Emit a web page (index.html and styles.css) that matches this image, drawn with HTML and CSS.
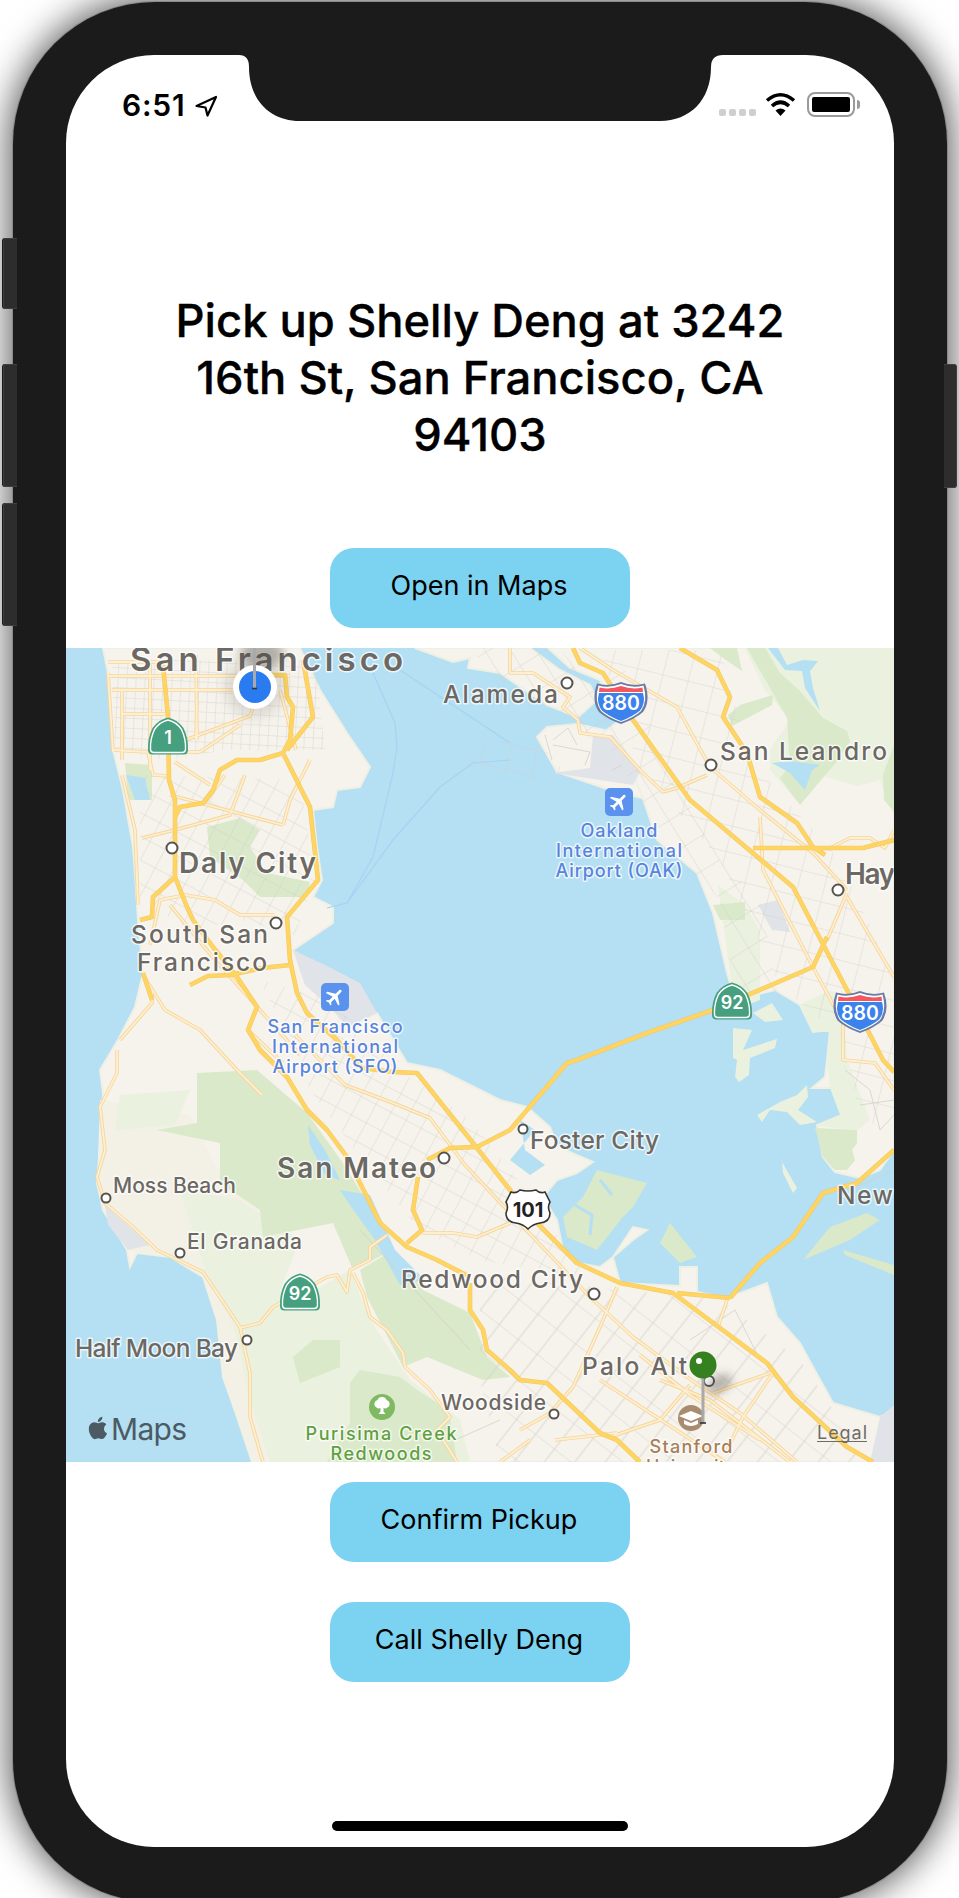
FILE: index.html
```html
<!DOCTYPE html>
<html lang="en">
<head>
<meta charset="utf-8">
<title>Pickup</title>
<link rel="stylesheet" href="styles.css">
</head>
<body>
<div class="stage">
  <span class="side-btn side-mute"></span>
  <span class="side-btn side-up"></span>
  <span class="side-btn side-down"></span>
  <span class="side-btn side-power"></span>
  <div class="device">
    <svg class="notch" viewBox="239 55 484 66" aria-hidden="true"><path d="M239 55H723Q711 55 711 67C711 100 690 121 660 121H300C270 121 249 100 249 67Q249 55 239 55Z"/></svg>
    <main class="screen">
      <header class="status">
        <div class="status-left">
          <span class="time">6:51</span>
          <svg class="loc" viewBox="195 94 23 22"><path d="M196.500 105L216 96L207.500 114.500L205.500 106.500Z"/></svg>
        </div>
        <div class="status-right">
          <div class="signal"><i></i><i></i><i></i><i></i></div>
          <svg class="wifi" viewBox="766 92 32 25"><path class="wifi-arc" d="M768 100.500Q781.500 89 795 100.500"/><path class="wifi-arc" d="M773 106Q781.500 98.500 790 106"/><path class="wifi-dot" d="M776.500 110.500Q781.500 106.500 786.500 110.500L781.500 116Z"/></svg>
          <div class="battery"><span class="battery-fill"></span></div>
          <span class="battery-nub"></span>
        </div>
      </header>
      <h1 class="title">Pick up Shelly Deng at 3242<br>16th St, San Francisco, CA<br>94103</h1>
      <button class="action action-open">Open in Maps</button>
      <svg class="map" viewBox="66 648 828 814" aria-label="Map of the San Francisco Bay">
        <defs>
          <pattern id="gridA" width="9" height="10" patternUnits="userSpaceOnUse" patternTransform="rotate(3)"><path class="st" d="M0 0H9M0 0V10"/></pattern>
          <pattern id="gridB" width="17" height="21" patternUnits="userSpaceOnUse" patternTransform="rotate(28)"><path class="st" d="M0 0H17M0 0V21"/></pattern>
          <pattern id="gridC" width="24" height="32" patternUnits="userSpaceOnUse" patternTransform="rotate(38)"><path class="st" d="M0 0H24M9 0V32"/></pattern>
          <pattern id="gridD" width="22" height="30" patternUnits="userSpaceOnUse" patternTransform="rotate(-32)"><path class="st" d="M0 0H22M0 0V30"/></pattern>
          <pattern id="gridE" width="26" height="26" patternUnits="userSpaceOnUse" patternTransform="rotate(14)"><path class="st" d="M0 0H26M0 0V26"/></pattern>
          <g id="ihs">
            <path class="ihs-edge" d="M3 2.500Q15 6 27 1Q39 6 51 2.500Q57 20 49 31Q41 38 27 43Q13 38 5 31Q-3 20 3 2.500Z"/>
            <path class="ihs-white" d="M4.500 4.500Q15 7.500 27 3Q39 7.500 49.500 4.500Q54 20 47 30Q40 36.500 27 41Q14 36.500 7 30Q0 20 4.500 4.500Z"/>
            <path class="ihs-blue" d="M5 12H49Q52 22 46 29.500Q39 35.500 27 40Q15 35.500 8 29.500Q2 22 5 12Z"/>
            <path class="ihs-red" d="M5.500 6.500Q16 9 27 5Q38 9 48.500 6.500L49 11H5Z"/>
          </g>
          <g id="state">
            <path class="state-bg" d="M20.500 0.500Q30 2.500 36 11Q41 21 40.500 33Q40.500 37.500 36 37.500H5Q0.500 37.500 0.500 33Q0 21 5 11Q11 2.500 20.500 0.500Z"/>
            <path class="state-line" d="M20.500 3Q29 5 34 12.500Q38.500 22 38 32Q38 35.500 34.500 35.500H6.500Q3 35.500 3 32Q2.500 22 7 12.500Q12 5 20.500 3Z"/>
          </g>
          <g id="plane">
            <rect class="air-box" width="28" height="28" rx="5"/>
            <path class="air-plane" transform="translate(14 14) rotate(45) scale(.92) translate(-12 -12)" d="M21 16v-2l-8-5V3.500c0-.83-.67-1.500-1.500-1.500S10 2.670 10 3.500V9l-8 5v2l8-2.500V19l-2 1.500V22l3.500-1 3.500 1v-1.500L13 19v-5.500l8 2.500z"/>
          </g>
          <g id="roads-a">
            <path d="M108 662H170M108 676H290M112 690H255M122 714H165M108 673L113 752M122 690L122 760M150 662V770M196 655L197 740M172 745L250 716L262 680M172 752H200L240 725M170 795L245 815L283 825M175 762L210 785M203 805L225 775M112 750L148 752L153 775L170 776M122 775L135 830L138 905M142 838L175 830L230 815L245 775M280 690L296 750M310 760L290 800L283 825M196 740L197 700"/>
            <path d="M150 945L160 900L185 895L215 900L240 915L275 915M143 975L165 1010L200 1030L237 1070L262 1095M170 905L215 960L260 1010L300 1055M120 1040L152 1003L152 990M248 1030L283 1063M295 1035L345 1085L393 1103L430 1118L465 1165L510 1213L590 1297L633 1337L687 1377L740 1413L797 1462"/>
            <path d="M117 1050L117 1073L100 1107L105 1150L97 1177L105 1203L133 1227L157 1250L203 1272L240 1327L250 1373L250 1417L263 1462M240 1328L260 1323L273 1307L327 1277L337 1275L347 1292L350 1270L370 1260L370 1247L387 1235M353 1273L363 1293L370 1317L387 1330L403 1353L405 1367L430 1390L450 1417L437 1430L457 1462"/>
            <path d="M422 1233L453 1233L477 1237L510 1223M520 1430L550 1413L573 1387L600 1327L617 1287M530 1440L500 1462M610 1437L660 1420L690 1385M617 1433L555 1440M713 1393L773 1372M727 1300L718 1327M773 1373L743 1417L727 1450M600 1380L725 1462M660 1380L710 1400L790 1462M640 1355L690 1395L760 1440"/>
            <path d="M510 648L510 673L533 673L570 697L563 707L578 720L580 733L610 737L640 770L663 792L677 788L707 775M580 648L613 670L677 707L710 767L760 810L813 853L847 890M760 817L763 870L813 967L843 1023L843 1060L875 1063L894 1090M847 893L827 940M847 897L894 977M830 848L850 838L870 838L885 848L894 830"/>
          </g>
          <g id="roads-h">
            <path d="M163 665L168 717L169 780L175 800L175 877L153 897L152 917L140 920M143 973L152 1000M175 877L187 907L193 920L213 947L237 977L257 1007L248 1030L260 1050L287 1077L307 1110L327 1130L347 1157L360 1183L380 1223L407 1247L437 1260L470 1277M470 1283L470 1310L483 1330L487 1350L510 1370L520 1380L547 1383L600 1433L617 1440L640 1462"/>
            <path d="M270 675H285L287 697L293 707L290 740L283 753L260 760L237 760L220 770L213 790L203 803L180 807L175 817M303 660L313 717L287 750M283 753L310 807L318 880L287 917L290 960L297 993L307 1013L337 1040L362 1068L393 1072L417 1073L473 1143L510 1190L537 1223L577 1263L620 1283L673 1293L767 1363L793 1397L847 1447L873 1462M230 975L262 968L290 965M190 985L208 976L232 975"/>
            <path d="M427 1160L450 1148L477 1147L510 1130L533 1103L567 1063L577 1060L647 1033L713 1010L813 967L827 937M418 1177L413 1210L422 1230L407 1243M730 1298L760 1263L793 1237L823 1193L857 1183L894 1150M677 1293L730 1298"/>
            <path d="M573 648L580 663L603 673L633 720L690 800L793 887L847 990L883 1060L894 1072M680 648L717 670L730 697L723 717L747 753L760 797L797 823L813 847L825 855M753 848L813 848L863 848L894 840"/>
          </g>
        </defs>

        <rect class="water" x="66" y="648" width="828" height="814"/>
        <path class="land" d="M103 648L108 673L113 750L123 790L133 847L135 873L138 920L143 973L135 1007L118 1040L100 1070L103 1093L102 1133L97 1183L103 1210L127 1250L130 1267L137 1253L170 1257L203 1277L217 1320L223 1377L237 1417L252 1462H894V1410L880 1417L833 1403L813 1367L800 1343L777 1317L767 1283L727 1298L697 1292L697 1267L680 1267L680 1286L620 1283L613 1257L633 1240L647 1230L633 1227L613 1257L600 1267L577 1263L563 1250L557 1220L543 1197L557 1180L577 1173L593 1162L558 1147L550 1127L527 1107L500 1100L440 1070L407 1063L377 1013L347 1027L333 1010L293 950L333 923L333 907L313 897L322 880L317 847L313 810L333 807L337 790L360 787L370 767L347 733L320 690L300 648Z"/>
        <path class="land" d="M415 648L453 662L470 658L468 668L500 673L547 705L578 717L597 700L590 685L560 670L530 648Z"/>
        <path class="land" d="M537 737L547 727L577 724L613 732L640 772L650 800L610 790L557 772Z"/>
        <path class="land" d="M548 648L570 668L600 680L620 720L600 735L625 760L640 790L657 840L697 873L713 913L727 973L735 1000L775 990L800 1005L813 1032L830 1030L827 1060L825 1077L812 1088L832 1088L842 1115L817 1125L823 1157L835 1172L860 1178L880 1170L894 1150V648Z"/>
        <path class="tan" d="M100 1100L190 1115L215 1165L260 1210L280 1290L325 1400L300 1462H252L237 1417L223 1377L217 1320L203 1277L170 1257L137 1253L127 1250L103 1210L97 1183Z"/>
        <path class="green-l" d="M180 1190L240 1200L300 1240L280 1290L345 1400L330 1462H270L250 1400L235 1330L205 1270Z"/>
        <path class="green-l" d="M120 1095L190 1090L175 1125L115 1130Z"/>
        <path class="green-l" d="M280 1310L350 1270L370 1320L390 1350L410 1380L460 1420L470 1462H300Z"/>
        <path class="green-l" d="M745 648H894V815L880 780L857 786L820 775L800 805L770 770L770 750L790 720L765 690Z"/>
        <path class="green-l" d="M718 885L745 905L760 930L760 1000L735 1010Z"/>
        <path class="green-l" d="M800 1005L830 990L850 1000L845 1032L813 1032Z"/>
        <path class="green-l" d="M830 1032L845 1030L847 1060L870 1120L857 1130L815 1126L840 1115L830 1088L827 1060Z"/>
        <path class="green-l" d="M733 1028L752 1030L743 1050L777 1039L775 1048L750 1058L749 1075L739 1082L735 1077L737 1060L733 1058Z"/>
        <path class="green-l" d="M753 1013L772 1003L783 1020L765 1022Z"/>
        <path class="green-l" d="M757 1115L780 1102L797 1095L807 1085L808 1097L798 1110L817 1122L800 1125L787 1112L770 1110L762 1122Z"/>
        <path class="green-l" d="M782 1162L797 1188L793 1193L783 1173Z"/>
        <path class="green-d" d="M197 1073L257 1070L307 1113L343 1163L380 1223L393 1250L353 1270L333 1223L263 1237L260 1210L220 1183L220 1143L157 1130L197 1123Z"/>
        <path class="green-d" d="M360 1270L393 1250L423 1290L470 1313L487 1357L510 1377L483 1380L427 1357L403 1367L367 1297Z"/>
        <path class="green-d" d="M350 1383L360 1370L400 1377L417 1390L437 1403L450 1417L457 1462H327L350 1423Z"/>
        <path class="green-d" d="M293 1357L313 1340L340 1340L340 1367L300 1383Z"/>
        <path class="green-d" d="M207 827L240 818L260 830L250 847L267 873L310 882L307 897L260 897L243 880L210 857Z"/>
        <path class="green-d" d="M125 763L152 765L152 800L128 800Z"/>
        <path class="water" d="M126 775L145 778L150 800L135 800Z"/>
        <path class="green-d" d="M747 648H765L780 673L800 691L823 718L847 731L850 741L838 760L800 805L780 778L790 765L787 718L770 688Z"/>
        <path class="green-d" d="M710 648H737L742 671L723 658Z"/>
        <path class="green-d" d="M728 715L740 705L773 695L772 705L732 726Z"/>
        <path class="green-d" d="M883 775L894 745V812L884 800Z"/>
        <path class="water" d="M768 648H778L787 665L803 660L818 661L810 671L813 688L820 711L805 688L802 671L785 670Z"/>
        <path class="water" d="M772 763L790 761L820 765L812 770L805 790L790 773Z"/>
        <path class="green-d" d="M713 905L745 902L745 920L720 920Z"/>
        <path class="green-d" d="M563 1217L583 1197L597 1170L647 1183L633 1207L623 1217L597 1250L567 1237Z"/>
        <path class="green-d" d="M660 1243L670 1223L697 1257L680 1263Z"/>
        <path class="green-d" d="M815 1128L857 1130L857 1143L852 1150L855 1160L847 1170L835 1170L823 1157Z"/>
        <path class="green-d" d="M803 1260L830 1227L867 1213L880 1220L850 1240Z"/>
        <path class="green-d" d="M843 1250L894 1265V1275L845 1255Z"/>
        <path class="channel" d="M575 1205L592 1215L590 1235M600 1180L612 1195"/>
        <path class="water" d="M520 1120L535 1130L510 1160L530 1175L545 1165L525 1150Z"/>
        <path class="water" d="M308 1125L325 1150L340 1180L325 1175L310 1145Z"/>
        <path class="water" d="M340 1190L370 1195L395 1250L425 1280L400 1285L375 1240L350 1205Z"/>
        <path class="airport" d="M593 735L613 735L640 772L633 785L567 775L553 773L590 768Z"/>
        <path class="airport" d="M293 950L325 965L360 983L377 1013L347 1027L333 1010L305 985Z"/>
        <path class="airport" d="M105 1205L150 1245L128 1250L108 1225Z"/>
        <path class="airport" d="M758 905L778 900L790 932L772 930Z"/>
        <path class="airport" d="M880 1417L894 1405V1462H870Z"/>
        <path class="ferry" d="M373 673L395 723L397 747L393 773L373 857L347 903L327 908M510 760L473 763L440 787L393 840L347 903M400 670L510 743"/>

        <path class="zone" fill="url(#gridA)" d="M112 660H315L325 750H225L165 760L115 750Z"/>
        <path class="zone" fill="url(#gridB)" d="M140 775L300 780L315 880L295 935L245 920L190 930L140 900Z"/>
        <path class="zone" fill="url(#gridB)" d="M260 980L330 1000L400 1070L470 1120L510 1170L590 1280L480 1260L420 1230L370 1170L310 1090Z"/>
        <path class="zone" fill="url(#gridC)" d="M480 1275L620 1290L720 1300L800 1360L840 1420L860 1462H500L480 1380Z"/>
        <path class="zone" fill="url(#gridD)" d="M470 648H560L600 700L620 660L660 750L720 860L760 900L780 1000L735 990L720 900L660 830L610 750L570 720L500 680Z"/>
        <path class="zone" fill="url(#gridE)" d="M600 650H720L750 760L840 860L894 980V1130L860 1120L845 1040L780 985L720 860L640 770Z"/>
        <path class="zone" fill="url(#gridE)" d="M455 755L480 740L540 745L565 772L520 780Z"/>
        <path class="st-path" d="M545 735L552 760M553 745L590 752L585 765M553 740L568 728L577 745M612 770L622 765M690 1340L735 1310L760 1360M845 1070L870 1090L880 1130L894 1115M860 1105L894 1100M850 1190L894 1170M360 1230L470 1350M500 1420L455 1440"/>

        <use href="#roads-a" class="art-case"/>
        <use href="#roads-a" class="art-fill"/>
        <use href="#roads-h" class="hwy-case"/>
        <use href="#roads-h" class="hwy-fill"/>

        <g class="dots">
          <circle cx="567" cy="683" r="5.500"/><circle cx="711" cy="765" r="5.500"/><circle cx="838" cy="890" r="5.500"/><circle cx="172" cy="848" r="5.500"/><circle cx="276" cy="923" r="5.500"/><circle cx="444" cy="1158" r="5.500"/><circle cx="523" cy="1129" r="4.500"/><circle cx="106" cy="1198" r="4.500"/><circle cx="180" cy="1253" r="4.500"/><circle cx="247" cy="1340" r="4.500"/><circle cx="594" cy="1294" r="5.500"/><circle cx="554" cy="1414" r="4.500"/><circle cx="709" cy="1381" r="5"/>
        </g>

        <g class="lbl">
          <text class="lbl-xl" x="130" y="671" textLength="273">San Francisco</text>
          <text class="lbl-m" x="443" y="703" textLength="115">Alameda</text>
          <text class="lbl-m" x="720" y="760" textLength="167">San Leandro</text>
          <text class="lbl-l" x="845" y="884" textLength="112">Hayward</text>
          <text class="lbl-l" x="179" y="873" textLength="137">Daly City</text>
          <text class="lbl-m" x="131" y="943" textLength="137">South San</text>
          <text class="lbl-m" x="137" y="971" textLength="130">Francisco</text>
          <text class="lbl-m" x="530" y="1149" textLength="129">Foster City</text>
          <text class="lbl-l" x="277" y="1178" textLength="159">San Mateo</text>
          <text class="lbl-s" x="113" y="1193" textLength="123">Moss Beach</text>
          <text class="lbl-s" x="187" y="1249" textLength="115">El Granada</text>
          <text class="lbl-m" x="837" y="1204" textLength="98">Newark</text>
          <text class="lbl-m" x="401" y="1288" textLength="182">Redwood City</text>
          <text class="lbl-m" x="75" y="1357" textLength="163">Half Moon Bay</text>
          <text class="lbl-m" x="582" y="1375" textLength="122">Palo Alto</text>
          <text class="lbl-s" x="441" y="1410" textLength="105">Woodside</text>
        </g>
        <g class="lbl-air">
          <text x="335" y="1033" textLength="135">San Francisco</text>
          <text x="335" y="1053" textLength="126">International</text>
          <text x="335" y="1073" textLength="125">Airport (SFO)</text>
          <text x="619" y="837" textLength="77">Oakland</text>
          <text x="619" y="857" textLength="126">International</text>
          <text x="619" y="877" textLength="127">Airport (OAK)</text>
        </g>
        <g class="lbl-park">
          <text x="381" y="1440" textLength="151">Purisima Creek</text>
          <text x="381" y="1460" textLength="101">Redwoods</text>
        </g>
        <g class="lbl-uni">
          <text x="691" y="1453" textLength="83">Stanford</text>
          <text x="691" y="1473" textLength="90">University</text>
        </g>

        <use href="#plane" x="321" y="983"/>
        <use href="#plane" x="605" y="788"/>

        <use href="#state" transform="translate(147.500 717)"/>
        <text class="shield-num" x="168" y="744">1</text>
        <use href="#state" transform="translate(711.500 982)"/>
        <text class="shield-num" x="732" y="1009">92</text>
        <use href="#state" transform="translate(279.500 1273)"/>
        <text class="shield-num" x="300" y="1300">92</text>
        <use href="#ihs" transform="translate(594 681)"/>
        <text class="shield-ihs" x="621" y="710">880</text>
        <use href="#ihs" transform="translate(833 990)"/>
        <text class="shield-ihs" x="860" y="1020">880</text>
        <path class="us-shield" d="M511 1192Q516 1194 520 1190Q528 1192 536 1190Q540 1194 545 1192L550 1202Q547 1207 550 1213Q550 1222 540 1223Q533 1224 528 1229Q523 1224 516 1223Q506 1222 506 1213Q509 1207 506 1202Z"/>
        <text class="shield-us" x="528" y="1217">101</text>

        <g class="park-ico">
          <circle cx="382" cy="1407" r="13"/>
          <path d="M382 1397a4.500 4.500 0 0 1 4.500 3a4 4 0 0 1 1 7.500a3.500 3.500 0 0 1-4 .5v3.500l2 2.500h-7l2-2.500v-3.500a3.500 3.500 0 0 1-4-.5a4 4 0 0 1 1-7.500a4.500 4.500 0 0 1 4.500-3z"/>
        </g>
        <g class="uni-ico">
          <circle cx="691" cy="1418" r="13"/>
          <path d="M691 1411L703 1416L691 1421L679 1416Z"/>
          <path d="M684 1420V1424Q691 1428 698 1424V1420L691 1423Z"/>
        </g>

        <ellipse class="pin-shadow" cx="719" cy="1384" rx="14" ry="8" transform="rotate(-30 719 1384)"/>
        <path class="pin-stem" d="M703 1378V1423"/>
        <path class="pin-tip" d="M700 1423H706"/>
        <circle class="pin-green" cx="703" cy="1365" r="13.500"/>
        <circle class="pin-hi" cx="699" cy="1361" r="3"/>

        <ellipse class="pin-shadow" cx="262" cy="654" rx="22" ry="14"/>
        <circle class="me-halo" cx="255" cy="687" r="30"/>
        <circle class="me-ring" cx="255" cy="687" r="22"/>
        <circle class="me-dot" cx="255" cy="687" r="16"/>
        <path class="pin-stem" d="M254.500 648V688"/>
        <path class="pin-tip" d="M252 688.500H257"/>

        <g class="brand">
          <path transform="translate(84.500 1414.500) scale(1.120)" d="M18.710 19.500c-.83 1.240-1.710 2.450-3.050 2.470-1.340.03-1.770-.79-3.290-.79-1.530 0-2 .77-3.270.82-1.310.05-2.300-1.320-3.140-2.530C4.250 17 2.940 12.450 4.700 9.390c.87-1.520 2.430-2.480 4.120-2.510 1.280-.02 2.500.87 3.290.87.78 0 2.260-1.070 3.810-.91.65.03 2.470.26 3.640 1.980-.09.06-2.170 1.280-2.150 3.810.03 3.020 2.650 4.030 2.680 4.040-.03.07-.42 1.440-1.380 2.830M13 3.500c.73-.83 1.940-1.460 2.940-1.500.13 1.170-.34 2.350-1.040 3.190-.69.85-1.830 1.510-2.950 1.420-.15-1.150.41-2.350 1.050-3.110z"/>
          <text x="111" y="1440" textLength="76">Maps</text>
        </g>
        <text class="legal" x="817" y="1439" textLength="50">Legal</text>
        <path class="legal-line" d="M817 1441.500H867"/>
      </svg>
      <button class="action action-confirm">Confirm Pickup</button>
      <button class="action action-call">Call Shelly Deng</button>
      <div class="home-bar"></div>
    </main>
  </div>
</div>
</body>
</html>
```
FILE: styles.css
```css
* { box-sizing: border-box; }
html, body { margin: 0; padding: 0; background: #fff; }
body { font-family: Inter, "Liberation Sans", sans-serif; overflow: hidden; }

.stage {
  position: relative;
  width: 959px;
  height: 1898px;
  padding: 2px 12px 0 13px;
  overflow: hidden;
  background: #fff;
}
.device {
  position: relative;
  height: 1900px;
  padding: 53px 53px 0 53px;
  background: #1b1b1b;
  border-radius: 142px;
  box-shadow: 0 0 0 1px #8a8a8a, 0 0 36px 4px rgba(0, 0, 0, .66);
}
.side-btn {
  position: absolute;
  left: 3px;
  width: 14px;
  background: #2d2d2d;
  border: 1px solid #3f3f3f;
  border-right: 0;
  border-radius: 3px 0 0 3px;
  box-shadow: -1px 0 0 #1a1a1a;
  z-index: 2;
}
.side-mute { top: 238px; height: 71px; }
.side-up { top: 364px; height: 123px; }
.side-down { top: 503px; height: 123px; }
.side-power {
  left: auto; right: 2px; top: 364px; height: 124px; width: 13px;
  border: 1px solid #3f3f3f; border-left: 0; border-radius: 0 3px 3px 0;
}
.notch {
  position: absolute;
  left: 226px;
  top: 53px;
  width: 484px;
  height: 66px;
  fill: #1b1b1b;
  z-index: 3;
}
.screen {
  display: flex;
  flex-direction: column;
  align-items: center;
  width: 828px;
  height: 1792px;
  overflow: hidden;
  background: #fff;
  border-radius: 88px;
}

.status {
  display: flex;
  justify-content: space-between;
  align-items: flex-start;
  width: 100%;
  height: 66px;
  flex: none;
  padding: 35px 34px 0 56px;
}
.status-left { display: flex; align-items: center; gap: 9px; }
.time { font-size: 30px; line-height: 30px; font-weight: 600; letter-spacing: .8px; color: #000; }
.loc { width: 23px; height: 22px; margin-top: 2px; fill: none; stroke: #000; stroke-width: 2.200; stroke-linejoin: round; }
.status-right { display: flex; align-items: flex-start; margin-top: 2px; }
.signal { display: flex; gap: 3px; margin-top: 17px; }
.signal i { width: 7px; height: 7px; border-radius: 2px; background: #cfcfcf; }
.wifi { width: 32px; height: 25px; margin: 0 10px 0 9px; }
.wifi-arc { fill: none; stroke: #000; stroke-width: 3.600; }
.wifi-dot { fill: #000; }
.battery {
  width: 48px; height: 25px; padding: 3px;
  border: 2px solid #9a9a9a; border-radius: 8px;
}
.battery-fill { display: block; height: 100%; background: #000; border-radius: 2px; }
.battery-nub { width: 3px; height: 9px; margin: 8px 0 0 2px; background: #9a9a9a; border-radius: 0 3px 3px 0; }

.title {
  width: 680px;
  margin: 171px 0 0;
  font-size: 45.300px;
  line-height: 57px;
  font-weight: 500;
  text-align: center;
  color: #000;
  flex: none;
  -webkit-text-stroke: .35px #000;
}
.action {
  display: block;
  width: 300px;
  height: 80px;
  flex: none;
  padding: 0 2px 5px 0;
  border: 0;
  border-radius: 24px;
  background: #7bd3f1;
  color: #000;
  font: 400 27px/32px Inter, "Liberation Sans", sans-serif;
}
.action-open { margin-top: 85px; }
.action-confirm { margin-top: 20px; }
.action-call { margin-top: 40px; }
.home-bar {
  width: 296px; height: 10px; margin: 139px 0 0; flex: none;
  background: #000; border-radius: 5px;
}

.map { display: block; width: 828px; height: 814px; flex: none; margin-top: 20px; }
.water { fill: #b5dff2; }
.land { fill: #f6f3ec; stroke: #eff0e4; stroke-width: 2; }
.tan { fill: #f3f0e5; }
.green-l { fill: #eaf1df; }
.green-d { fill: #d9e9c9; }
.channel { fill: none; stroke: #b5dff2; stroke-width: 3; }
.airport { fill: #e0e3e8; }
.ferry { fill: none; stroke: #a4d4f3; stroke-width: 1.200; }
.st { fill: none; stroke: #d3d1cb; stroke-width: .8; }
.zone { stroke: none; }
.st-path { fill: none; stroke: #d3d1cb; stroke-width: .8; }

.art-case { fill: none; stroke: #f7d59a; stroke-width: 3.600; stroke-linejoin: round; }
.art-fill { fill: none; stroke: #fdf0d2; stroke-width: 1.800; stroke-linejoin: round; }
.hwy-case { fill: none; stroke: #f4c66a; stroke-width: 4.600; stroke-linejoin: round; }
.hwy-fill { fill: none; stroke: #fdd560; stroke-width: 3.600; stroke-linejoin: round; }

.dots circle { fill: #fff; stroke: #55524f; stroke-width: 2; }

.lbl text, .lbl-air text, .lbl-park text, .lbl-uni text {
  font-family: Inter, "Liberation Sans", sans-serif;
  paint-order: stroke;
  stroke: rgba(255, 255, 255, .72);
  stroke-width: 3px;
  stroke-linejoin: round;
}
.lbl text { fill: #6c6864; font-weight: 500; }
.lbl .lbl-xl { font-size: 33px; font-weight: 600; }
.lbl .lbl-l { font-size: 28px; font-weight: 600; }
.lbl .lbl-m { font-size: 24.500px; }
.lbl .lbl-s { font-size: 21px; }
.lbl-air text { fill: #5784de; font-size: 18px; font-weight: 500; text-anchor: middle; }
.lbl-park text { fill: #5fa040; font-size: 18px; font-weight: 500; text-anchor: middle; }
.lbl-uni text { fill: #a87f58; font-size: 18px; font-weight: 500; text-anchor: middle; }

.air-box { fill: #5a92ee; }
.air-plane { fill: #fff; }
.state-bg { fill: #46a07f; }
.state-line { fill: none; stroke: #fff; stroke-width: 1.400; }
.ihs-edge { fill: #6a7ca6; }
.ihs-white { fill: #fff; }
.ihs-blue { fill: #3b82ec; }
.ihs-red { fill: #f2585e; }
.shield-num, .shield-ihs, .shield-us { font-family: Inter, "Liberation Sans", sans-serif; font-weight: 600; text-anchor: middle; }
.shield-num { font-size: 18px; fill: #fff; }
.shield-ihs { font-size: 19.500px; fill: #fff; }
.shield-us { font-size: 20px; font-weight: 700; fill: #222; }
.us-shield { fill: #fff; stroke: #333; stroke-width: 1.600; }

.park-ico circle { fill: #7fb962; }
.park-ico path { fill: #fff; }
.uni-ico circle { fill: #a98c70; }
.uni-ico path { fill: #fff; }

.pin-shadow { fill: rgba(70, 65, 60, .38); filter: blur(5px); }
.pin-stem { fill: none; stroke: #a9a9a9; stroke-width: 3; }
.pin-tip { fill: none; stroke: #333; stroke-width: 1.600; }
.pin-green { fill: #35801f; }
.pin-hi { fill: #fff; }
.me-halo { fill: rgba(90, 90, 90, .16); filter: blur(6px); }
.me-ring { fill: #fff; }
.me-dot { fill: #2a7bef; }

.brand path { fill: #4c5a63; }
.brand text { font-family: Inter, "Liberation Sans", sans-serif; font-size: 30px; fill: #4c5a63; }
.legal { font-family: Inter, "Liberation Sans", sans-serif; font-size: 18px; fill: #6f6c68; }
.legal-line { fill: none; stroke: #6f6c68; stroke-width: 1.200; }
```
